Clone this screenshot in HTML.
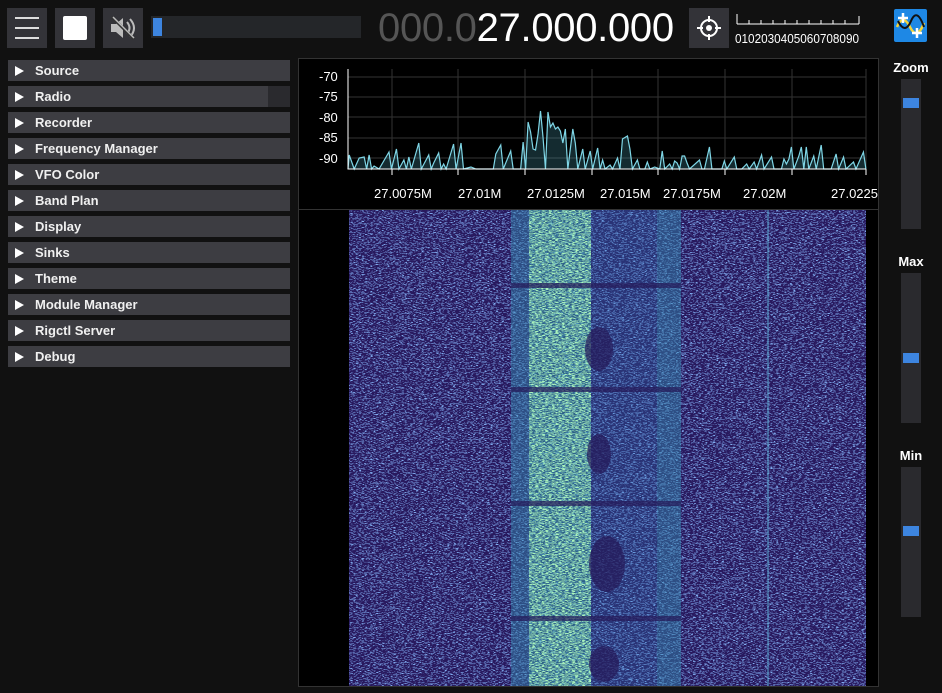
<!DOCTYPE html>
<html><head><meta charset="utf-8"><style>
*{margin:0;padding:0;box-sizing:border-box}
body{width:942px;height:693px;background:#111111;font-family:"Liberation Sans",sans-serif;color:#fff;position:relative;overflow:hidden}
.a{position:absolute}
.btn{background:#333338;}
.hdr{position:absolute;left:8px;width:282px;height:21px;background:#3d3d42;font-size:13px;font-weight:bold;color:#f0f0f0;line-height:21px;padding-left:27px}
.hdr:before{content:"";position:absolute;left:7px;top:6px;border-left:9px solid #fff;border-top:5px solid transparent;border-bottom:5px solid transparent}
.sl{position:absolute;left:901px;width:20px;background:#2a2a2e}
.knob{position:absolute;left:2px;width:16px;height:10px;background:#3d85e0}
.lbl{position:absolute;width:60px;left:881px;text-align:center;font-size:13px;font-weight:bold}
</style></head><body>
<div class="a btn" style="left:7px;top:8px;width:40px;height:40px"></div>
<div class="a" style="left:15px;top:17px;width:24px;height:2px;background:#ddd"></div>
<div class="a" style="left:15px;top:27px;width:24px;height:2px;background:#ddd"></div>
<div class="a" style="left:15px;top:37px;width:24px;height:2px;background:#ddd"></div>
<div class="a btn" style="left:55px;top:8px;width:40px;height:40px"></div>
<div class="a" style="left:63px;top:16px;width:24px;height:24px;background:#fff;border-radius:2px"></div>
<div class="a btn" style="left:103px;top:8px;width:40px;height:40px"></div>
<svg class="a" style="left:108px;top:13px" width="30" height="30" viewBox="0 0 30 30"><path d="M3 11h5l7-6v20l-7-6H3z" fill="#bbb"/><path d="M19 9q5 6 0 12M22 6q8 9 0 18" stroke="#bbb" stroke-width="2" fill="none"/><path d="M4 4l22 22" stroke="#333" stroke-width="3"/><path d="M5 4l21 21" stroke="#bbb" stroke-width="1.5"/></svg>
<div class="a" style="left:151px;top:16px;width:210px;height:22px;background:#242629"></div>
<div class="a" style="left:153px;top:18px;width:9px;height:18px;background:#3d85e0"></div>
<div class="a" style="left:378px;top:4px;font-size:40px;line-height:48px;color:#555;letter-spacing:-0.3px">000.0<span style="color:#fff">27.000.000</span></div>
<div class="a btn" style="left:689px;top:8px;width:40px;height:40px"></div>
<svg class="a" style="left:694px;top:13px" width="30" height="30" viewBox="0 0 30 30"><circle cx="15" cy="15" r="8" stroke="#fff" stroke-width="2" fill="none"/><circle cx="15" cy="15" r="3" fill="#fff"/><path d="M15 3v6M15 21v6M3 15h6M21 15h6" stroke="#fff" stroke-width="2"/></svg>
<svg class="a" style="left:735px;top:12px" width="130" height="34"><path d="M2 2v10M2 12h122M124 4v8" stroke="#fff" stroke-width="1"/><g stroke="#fff"><path d="M14 8v4M26 8v4M38 8v4M50 8v4M62 8v4M74 8v4M86 8v4M98 8v4M110 8v4"/></g><text x="0" y="31" font-size="13" fill="#fff" font-family="Liberation Sans" textLength="124" lengthAdjust="spacingAndGlyphs">0102030405060708090</text></svg>
<svg class="a" style="left:894px;top:9px" width="33" height="33" viewBox="0 0 33 33"><rect width="33" height="33" rx="2" fill="#1e88e5"/><path d="M3 18q6-14 13 0t14-4" stroke="#f3d43b" stroke-width="2.5" fill="none"/><path d="M4 12q7 14 13 0t13 6" stroke="#111" stroke-width="2" fill="none"/><path d="M9 4v10M4 9h10M23 19v10M18 24h10" stroke="#fff" stroke-width="2.5"/></svg>
<div class="hdr" style="top:60px">Source</div>
<div class="hdr" style="top:86px">Radio<div class="a" style="right:0;top:0;width:22px;height:21px;background:#2a2a2e"></div></div>
<div class="hdr" style="top:112px">Recorder</div>
<div class="hdr" style="top:138px">Frequency Manager</div>
<div class="hdr" style="top:164px">VFO Color</div>
<div class="hdr" style="top:190px">Band Plan</div>
<div class="hdr" style="top:216px">Display</div>
<div class="hdr" style="top:242px">Sinks</div>
<div class="hdr" style="top:268px">Theme</div>
<div class="hdr" style="top:294px">Module Manager</div>
<div class="hdr" style="top:320px">Rigctl Server</div>
<div class="hdr" style="top:346px">Debug</div>
<div class="a" style="left:298px;top:58px;width:581px;height:629px;border:1px solid #333;background:#000"></div>
<svg class="a" style="left:299px;top:59px" width="579" height="627">
<defs>
<filter id="n" x="0" y="0" width="100%" height="100%"><feTurbulence type="fractalNoise" baseFrequency="0.35 2.2" numOctaves="2" seed="3"/><feColorMatrix values="0 0 0 0 0.22  0 0 0 0 0.42  0 0 0 0 0.88  0 0 0 -7 3.3"/></filter>
<filter id="g" x="0" y="0" width="100%" height="100%"><feTurbulence type="fractalNoise" baseFrequency="0.3 1.8" numOctaves="2" seed="7"/><feColorMatrix values="0 0 0 0 0.4  0 0 0 0 0.9  0 0 0 0 0.5  0 0 0 -6 3.3"/></filter>
</defs>
<g stroke="#333" stroke-width="1">
<path d="M49 18H567M49 38H567M49 58H567M49 79H567M49 99H567"/>
<path d="M93 10V110M159 10V110M226 10V110M293 10V110M359 10V110M426 10V110M493 10V110M567 10V110"/>
</g>
<g fill="#fff" font-size="13" font-family="Liberation Sans">
<text x="20" y="22">-70</text><text x="20" y="42">-75</text><text x="20" y="63">-80</text><text x="20" y="83">-85</text><text x="20" y="104">-90</text>
<text x="75" y="139">27.0075M</text><text x="159" y="139">27.01M</text><text x="228" y="139">27.0125M</text><text x="301" y="139">27.015M</text><text x="364" y="139">27.0175M</text><text x="444" y="139">27.02M</text><text x="532" y="139">27.0225</text>
</g>
<polyline transform="translate(49 0) scale(1.242 1) translate(-49 0)" vector-effect="non-scaling-stroke" fill="rgba(80,170,190,0.25)" stroke="#7fd6e6" stroke-width="1.2" points="49,110 50,96 54,110 58,99 62,98 64,110 66,96 68,110 70,107 74,110 82,93 84,110 88,90 90,110 94,101 96,110 98,98 100,110 106,84 108,110 114,96 116,110 118,104 122,94 124,110 126,105 128,110 134,85 136,110 140,84 142,110 148,108 152,110 166,110 168,95 172,86 174,110 180,92 182,110 188,110 190,83 192,110 194,63 196,73 198,90 200,91 202,75 204,52 206,78 208,110 210,53 212,68 214,64 216,70 218,68 220,72 222,84 224,70 226,110 230,70 232,84 234,110 238,90 240,110 244,92 246,110 250,89 252,110 254,101 256,110 260,106 262,110 266,99 268,110 270,80 274,77 276,90 278,110 282,101 284,110 288,110 290,103 292,110 296,108 300,110 302,92 304,110 308,105 310,110 312,102 314,104 316,110 318,97 320,97 322,104 324,110 332,101 334,110 336,110 340,88 342,110 350,110 352,102 354,110 360,98 362,110 366,110 370,105 372,110 376,103 378,110 382,96 384,110 390,98 392,110 398,110 400,100 402,105 404,100 406,88 408,110 412,97 414,88 416,110 418,88 420,110 424,97 426,110 430,86 432,110 438,110 442,95 444,110 448,98 450,110 456,103 458,110 464,93 466,110"/>
<path d="M49 10V110H567" stroke="#fff" stroke-width="1" fill="none"/>
<path d="M93 110v6M159 110v6M226 110v6M293 110v6M359 110v6M426 110v6M493 110v6M567 110v6" stroke="#fff"/>
<rect x="0" y="150" width="579" height="1" fill="#333"/>
<rect x="50" y="151" width="517" height="476" fill="#28195e"/>
<rect x="50" y="151" width="517" height="476" filter="url(#n)"/>
<rect x="212" y="151" width="170" height="476" fill="#2e6fae" opacity="0.3"/>
<rect x="230" y="151" width="62" height="476" fill="#30a0a0" opacity="0.4"/>
<rect x="230" y="151" width="62" height="476" filter="url(#g)"/>
<rect x="212" y="151" width="18" height="476" fill="#3aa0b0" opacity="0.25"/>
<rect x="358" y="151" width="24" height="476" fill="#3aa0b0" opacity="0.25"/>
<g fill="#251a5a" opacity="0.7">
<rect x="212" y="224" width="170" height="5"/><rect x="212" y="328" width="170" height="5"/><rect x="212" y="442" width="170" height="5"/><rect x="212" y="557" width="170" height="5"/>
<ellipse cx="300" cy="290" rx="14" ry="22"/><ellipse cx="300" cy="395" rx="12" ry="20"/><ellipse cx="308" cy="505" rx="18" ry="28"/><ellipse cx="305" cy="605" rx="15" ry="18"/>
</g>
<rect x="468" y="151" width="2" height="476" fill="#5aa8d0" opacity="0.5"/>
</svg>
<div class="lbl" style="top:60px">Zoom</div>
<div class="sl" style="top:79px;height:150px"><div class="knob" style="top:19px"></div></div>
<div class="lbl" style="top:254px">Max</div>
<div class="sl" style="top:273px;height:150px"><div class="knob" style="top:80px"></div></div>
<div class="lbl" style="top:448px">Min</div>
<div class="sl" style="top:467px;height:150px"><div class="knob" style="top:59px"></div></div>
</body></html>
